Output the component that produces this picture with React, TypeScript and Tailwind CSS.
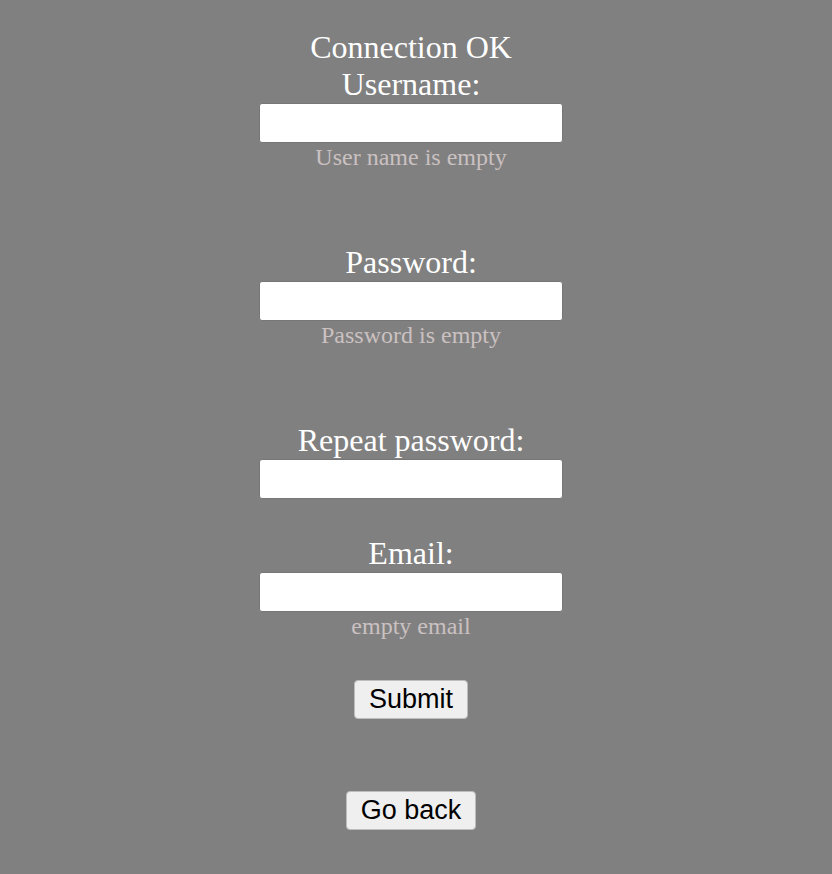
import React from 'react';

const serif = { fontFamily: '"Liberation Serif", "Times New Roman", serif' };
const sans = { fontFamily: '"Liberation Sans", Arial, sans-serif' };

const Field = ({ label, error, type = 'text', gap }: { label: string; error?: string; type?: string; gap: string }) => (
  <div className={`flex flex-col items-center ${gap}`}>
    <label className="text-[32px] leading-[37px] text-white">{label}</label>
    <input
      type={type}
      className="box-border w-[304px] h-[40px] bg-white border border-[#767676] rounded-[3px] px-2 text-[20px] text-black outline-none"
    />
    {error && <div className="text-[24px] leading-[28px] text-[#cbc1c1]">{error}</div>}
  </div>
);

const App = () => {
  return (
    <div className="min-h-screen w-full bg-[#808080] flex flex-col items-center pt-[29px] pr-[10px]" style={serif}>
      <div className="text-[32px] leading-[37px] text-white">Connection OK</div>
      <Field label="Username:" error="User name is empty" gap="mb-[73px]" />
      <Field label="Password:" type="password" error="Password is empty" gap="mb-[73px]" />
      <Field label="Repeat password:" type="password" gap="mb-[36px]" />
      <Field label="Email:" type="email" error="empty email" gap="mb-[40px]" />
      <button
        className="bg-[#efefef] border border-[#bdbdbd] rounded-[4px] px-[14px] py-[3px] text-[27px] leading-[31px] text-black"
        style={sans}
      >
        Submit
      </button>
      <button
        className="mt-[72px] bg-[#efefef] border border-[#bdbdbd] rounded-[4px] px-[14px] py-[3px] text-[27px] leading-[31px] text-black"
        style={sans}
      >
        Go back
      </button>
    </div>
  );
};

export default App;
